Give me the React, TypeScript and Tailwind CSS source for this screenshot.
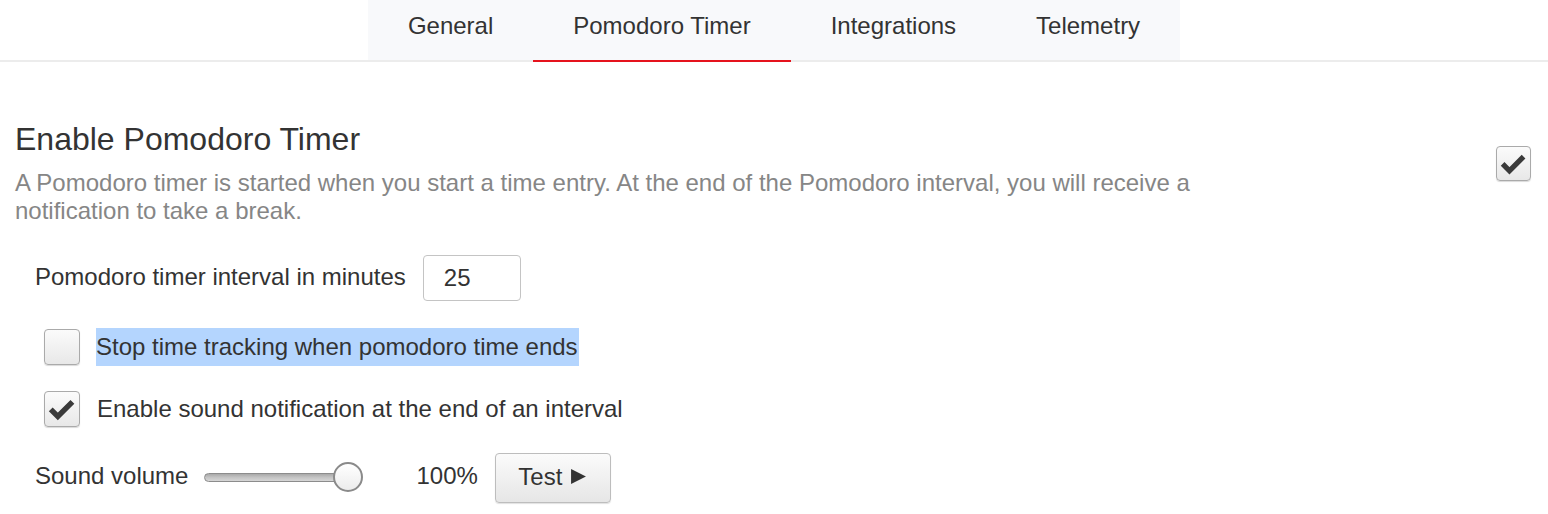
import { useState } from "react";

const tabs = ["General", "Pomodoro Timer", "Integrations", "Telemetry"];

function CheckMark({ className }: { className?: string }) {
	return (
		<svg viewBox="0 0 36 36" className={className} aria-hidden="true">
			<path
				d="M4.5 18.5 L13 27 L30.5 9.5"
				fill="none"
				stroke="#3a3a3a"
				strokeWidth="6.5"
				strokeLinejoin="miter"
			/>
		</svg>
	);
}

function Checkbox({
	checked,
	onChange,
	size = "w-[36px] h-[36px]",
}: {
	checked: boolean;
	onChange: (v: boolean) => void;
	size?: string;
}) {
	return (
		<button
			type="button"
			role="checkbox"
			aria-checked={checked}
			onClick={() => onChange(!checked)}
			className={`${size} shrink-0 rounded-[4px] border border-[#aaaaaa] bg-gradient-to-b from-[#fbfbfb] to-[#e8e8e8] shadow-[0_1px_1px_rgba(0,0,0,0.15)] flex items-center justify-center p-[2px]`}
		>
			{checked && <CheckMark className="w-full h-full" />}
		</button>
	);
}

function VolumeSlider({ value }: { value: number }) {
	return (
		<div className="relative w-[159px] h-[32px] flex items-center">
			<div className="w-[150px] h-[9px] rounded-full border border-[#8c8c8c] bg-gradient-to-b from-[#a9a9a9] via-[#c4c4c4] to-[#d6d6d6]" />
			<div
				className="absolute top-[1px] w-[30px] h-[30px] rounded-full border-2 border-[#8a8a8a] bg-gradient-to-b from-white to-[#ececec]"
				style={{ left: `${(value / 100) * 129}px` }}
			/>
		</div>
	);
}

export default function App() {
	const [active, setActive] = useState("Pomodoro Timer");
	const [enabled, setEnabled] = useState(true);
	const [stopTracking, setStopTracking] = useState(false);
	const [sound, setSound] = useState(true);
	const [interval, setIntervalValue] = useState("25");
	const volume = 100;

	return (
		<div className="w-full h-[514px] bg-white text-[#333] font-['Liberation_Sans',Arial,sans-serif] overflow-hidden">
			<nav className="flex justify-center border-b-2 border-[#ececec]">
				<div className="flex bg-[#f8f9fb]">
					{tabs.map((tab) => (
						<button
							key={tab}
							type="button"
							onClick={() => setActive(tab)}
							className={`h-[62px] px-10 pb-[8px] text-[24px] leading-none text-[#333] border-b-2 -mb-[2px] ${
								active === tab ? "border-[#e5131d]" : "border-transparent"
							}`}
						>
							{tab}
						</button>
					))}
				</div>
			</nav>

			<section className="px-[15px] pt-[59px]">
				<div className="flex items-start justify-between">
					<div className="max-w-[1200px]">
						<h1 className="text-[32px] leading-[36px] font-normal text-[#333]">
							Enable Pomodoro Timer
						</h1>
						<p className="mt-[12px] text-[24px] leading-[28px] text-[#868686]">
							A Pomodoro timer is started when you start a time entry. At the end
							of the Pomodoro interval, you will receive a notification to take a
							break.
						</p>
					</div>
					<div className="mt-[25px] mr-[2px]">
						<Checkbox
							checked={enabled}
							onChange={setEnabled}
							size="w-[35px] h-[35px]"
						/>
					</div>
				</div>

				<div className="pl-5 text-[24px]">
					<div className="mt-[30px] flex items-center h-[46px]">
						<label htmlFor="interval" className="text-[#333] pb-[2px]">
							Pomodoro timer interval in minutes
						</label>
						<input
							id="interval"
							value={interval}
							onChange={(e) => setIntervalValue(e.target.value)}
							className="ml-[17px] w-[98px] h-[46px] rounded-[4px] border border-[#c4c4c4] px-[20px] text-[24px] text-[#333] outline-none"
						/>
					</div>

					<div className="mt-[27px] flex items-center h-[38px] pl-[9px]">
						<Checkbox checked={stopTracking} onChange={setStopTracking} />
						<span className="ml-[16px] h-[38px] flex items-center bg-[#b4d5fe] pr-[1px]">
							Stop time tracking when pomodoro time ends
						</span>
					</div>

					<div className="mt-6 flex items-center h-[38px] pl-[9px]">
						<Checkbox checked={sound} onChange={setSound} />
						<span className="ml-[17px]">
							Enable sound notification at the end of an interval
						</span>
					</div>

					<div className="mt-[25px] flex items-center h-[50px]">
						<span className="pb-[4px]">Sound volume</span>
						<div className="ml-[16px] pb-[2px]">
							<VolumeSlider value={volume} />
						</div>
						<span className="ml-[53px] pb-[4px]">{volume}%</span>
						<button
							type="button"
							className="ml-[17px] w-[116px] h-[50px] rounded-[4px] border border-[#bdbdbd] bg-gradient-to-b from-[#fbfbfb] to-[#e6e6e6] shadow-[0_1px_1px_rgba(0,0,0,0.12)] flex items-center justify-center gap-[8px] pb-[3px] text-[24px] text-[#333]"
						>
							Test
							<svg viewBox="0 0 16 16" className="w-[17px] h-[17px]" aria-hidden="true">
								<path d="M1 1 L15 8 L1 15 Z" fill="#333" />
							</svg>
						</button>
					</div>
				</div>
			</section>
		</div>
	);
}
